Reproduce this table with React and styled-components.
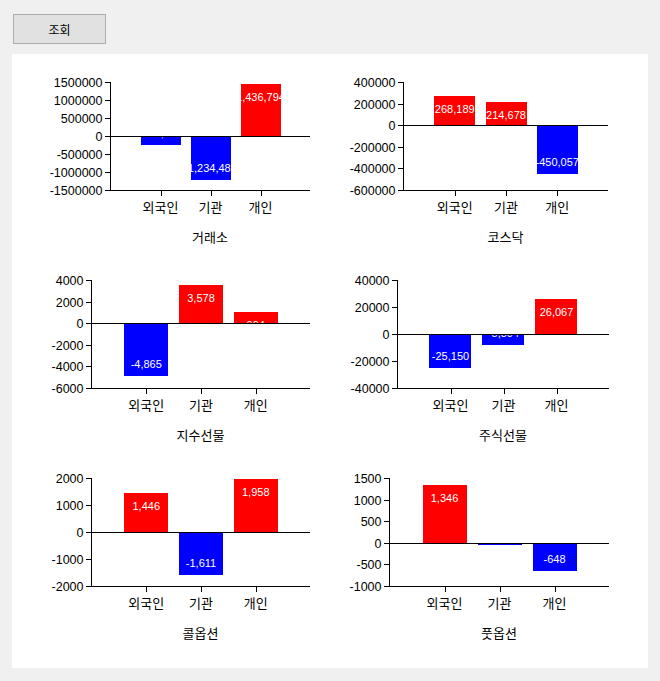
import React from "react";
import styled, { createGlobalStyle } from "styled-components";

const GlobalStyle = createGlobalStyle`
  html, body {
    margin: 0;
    padding: 0;
    background: #f0f0f0;
  }
  body {
    font-family: "Noto Sans CJK KR", "Liberation Sans", sans-serif;
  }
`;

const Page = styled.div`
  width: 660px;
  height: 681px;
  box-sizing: border-box;
  padding: 14px 0 0 12px;
  display: flex;
  flex-direction: column;
  gap: 10px;
`;

const Toolbar = styled.div`
  display: flex;
  padding-left: 1px;
`;

const QueryButton = styled.button`
  width: 93px;
  height: 30px;
  box-sizing: border-box;
  border: 1px solid #adadad;
  background: #e1e1e1;
  color: #000;
  font-family: "Noto Sans CJK KR", "Liberation Sans", sans-serif;
  font-size: 12px;
  padding: 0;
  cursor: pointer;
`;

const Panel = styled.div`
  width: 636px;
  height: 614px;
  box-sizing: border-box;
  background: #ffffff;
  padding: 12px 0 0 24px;
  display: grid;
  grid-template-columns: 298px 298px;
  grid-auto-rows: 198px;
  align-content: start;
`;

const ChartSvg = styled.svg`
  display: block;
  width: 298px;
  height: 198px;
  overflow: visible;
`;

const AxisLabel = styled.text`
  font-family: "Liberation Sans", Arial, sans-serif;
  font-size: 12.5px;
  fill: #000;
`;

const ValueLabel = styled.text`
  font-family: "Liberation Sans", Arial, sans-serif;
  font-size: 11px;
  fill: #ffffff;
`;

const CategoryLabel = styled.text`
  font-family: "Noto Sans CJK KR", "Liberation Sans", sans-serif;
  font-size: 13px;
  fill: #000;
`;

const TitleLabel = styled.text`
  font-family: "Noto Sans CJK KR", "Liberation Sans", sans-serif;
  font-size: 13px;
  fill: #000;
`;

const CATEGORIES = ["외국인", "기관", "개인"];

const charts = [
  { title: "거래소", min: -1500000, max: 1500000, step: 500000, axisX: 74, right: 274, values: [-247835, -1234485, 1436794] },
  { title: "코스닥", min: -600000, max: 400000, step: 200000, axisX: 69, right: 274, values: [268189, 214678, -450057] },
  { title: "지수선물", min: -6000, max: 4000, step: 2000, axisX: 55, right: 274, values: [-4865, 3578, 994] },
  { title: "주식선물", min: -40000, max: 40000, step: 20000, axisX: 63, right: 275, values: [-25150, -8304, 26067] },
  { title: "콜옵션", min: -2000, max: 2000, step: 1000, axisX: 55, right: 274, values: [1446, -1611, 1958] },
  { title: "풋옵션", min: -1000, max: 1500, step: 500, axisX: 55, right: 275, values: [1346, -42, -648] },
];

const TOP = 16;
const BOTTOM = 124;

function fmt(v) {
  return v.toLocaleString("en-US");
}

function BarChart({ title, min, max, step, axisX, right, values }) {
  const yOf = (v) => TOP + ((max - v) / (max - min)) * (BOTTOM - TOP);
  const zeroY = Math.round(yOf(0));
  const origin = axisX + 0.5;
  const slot = (right - axisX) / 4;
  const barW = slot * 0.8;

  const ticks = [];
  for (let v = max; v >= min - 1e-9; v -= step) ticks.push(v);

  return (
    <ChartSvg viewBox="0 0 298 198">
      {values.map((v, i) => {
        const cx = origin + slot * (i + 1);
        const yv = Math.round(yOf(v));
        const y1 = Math.min(yv, zeroY);
        const h = Math.max(Math.abs(yv - zeroY), 1);
        const labelY = v >= 0 ? y1 + 16.5 : y1 + h - 8;
        return (
          <g key={i}>
            <rect
              x={Math.round(cx - barW / 2)}
              y={y1}
              width={Math.round(barW)}
              height={h}
              fill={v >= 0 ? "#ff0000" : "#0000ff"}
              shapeRendering="crispEdges"
            />
            <ValueLabel x={cx} y={labelY} textAnchor="middle">
              {fmt(v)}
            </ValueLabel>
          </g>
        );
      })}

      <g stroke="#000" strokeWidth="1" shapeRendering="crispEdges">
        <line x1={origin} y1={TOP} x2={origin} y2={BOTTOM + 1} />
        <line x1={axisX} y1={BOTTOM + 0.5} x2={right} y2={BOTTOM + 0.5} />
        <line x1={axisX} y1={zeroY + 0.5} x2={right} y2={zeroY + 0.5} />
        {ticks.map((v) => {
          const ty = Math.round(yOf(v)) + 0.5;
          return <line key={v} x1={axisX - 5} y1={ty} x2={axisX} y2={ty} />;
        })}
        {CATEGORIES.map((c, i) => {
          const cx = Math.round(origin + slot * (i + 1)) + 0.5;
          return <line key={c} x1={cx} y1={BOTTOM} x2={cx} y2={BOTTOM + 6} />;
        })}
      </g>

      {ticks.map((v) => (
        <AxisLabel key={v} x={axisX - 7.5} y={Math.round(yOf(v)) + 5} textAnchor="end">
          {v}
        </AxisLabel>
      ))}

      {CATEGORIES.map((c, i) => (
        <CategoryLabel key={c} x={origin + slot * (i + 1)} y={146} textAnchor="middle">
          {c}
        </CategoryLabel>
      ))}

      <TitleLabel x={(axisX + right) / 2} y={176} textAnchor="middle">
        {title}
      </TitleLabel>
    </ChartSvg>
  );
}

export default function App() {
  return (
    <>
      <GlobalStyle />
      <Page>
        <Toolbar>
          <QueryButton type="button">조회</QueryButton>
        </Toolbar>
        <Panel>
          {charts.map((c) => (
            <BarChart key={c.title} {...c} />
          ))}
        </Panel>
      </Page>
    </>
  );
}
